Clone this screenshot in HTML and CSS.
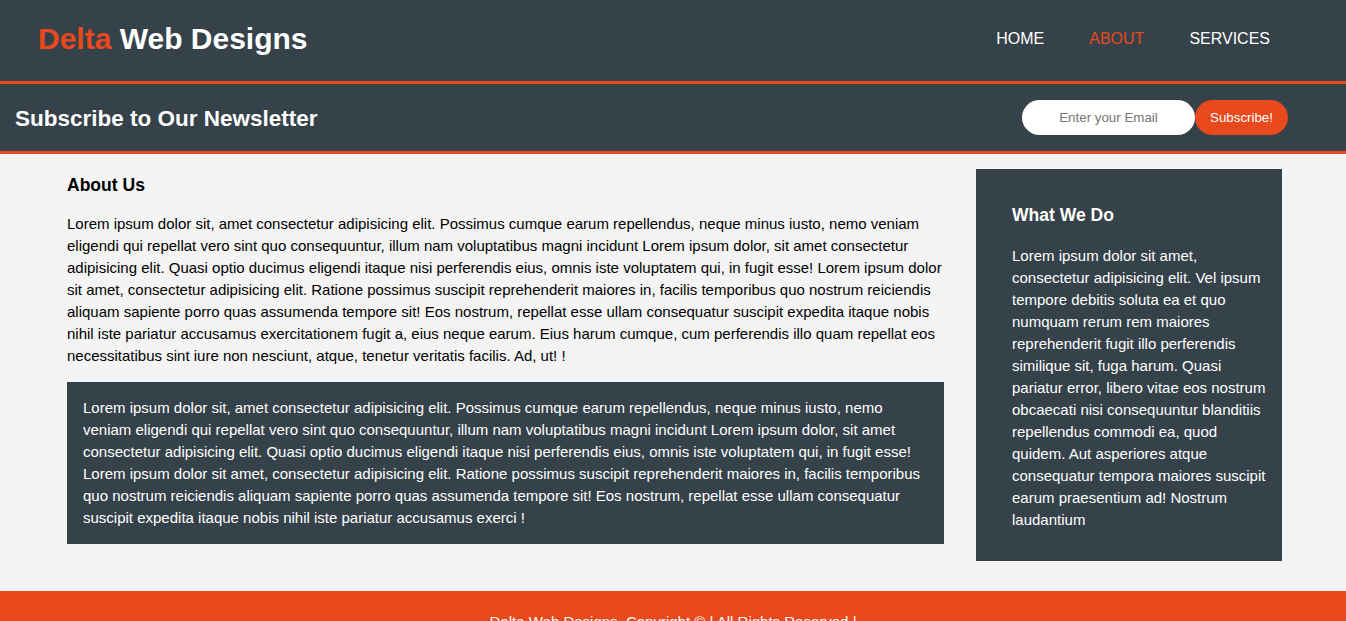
FILE: index.html
```html
<!DOCTYPE html>
<html lang="en">
<head>
<meta charset="utf-8">
<title>Delta Web Designs | About</title>
<link rel="stylesheet" href="styles.css">
</head>
<body>
<header class="site-header">
  <h1 class="logo"><span class="highlight">Delta</span> Web Designs</h1>
  <nav class="nav">
    <a href="#" class="nav-link">HOME</a>
    <a href="#" class="nav-link current">ABOUT</a>
    <a href="#" class="nav-link">SERVICES</a>
  </nav>
</header>
<section class="newsletter">
  <h1 class="newsletter-title">Subscribe to Our Newsletter</h1>
  <form class="subscribe-form">
    <input type="email" class="email-input" placeholder="Enter your Email">
    <button type="submit" class="subscribe-btn">Subscribe!</button>
  </form>
</section>
<main class="main">
  <article class="about">
    <h3 class="about-title">About Us</h3>
    <p class="about-text">Lorem ipsum dolor sit, amet consectetur adipisicing elit. Possimus cumque earum repellendus, neque minus iusto, nemo veniam eligendi qui repellat vero sint quo consequuntur, illum nam voluptatibus magni incidunt Lorem ipsum dolor, sit amet consectetur adipisicing elit. Quasi optio ducimus eligendi itaque nisi perferendis eius, omnis iste voluptatem qui, in fugit esse! Lorem ipsum dolor sit amet, consectetur adipisicing elit. Ratione possimus suscipit reprehenderit maiores in, facilis temporibus quo nostrum reiciendis aliquam sapiente porro quas assumenda tempore sit! Eos nostrum, repellat esse ullam consequatur suscipit expedita itaque nobis nihil iste pariatur accusamus exercitationem fugit a, eius neque earum. Eius harum cumque, cum perferendis illo quam repellat eos necessitatibus sint iure non nesciunt, atque, tenetur veritatis facilis. Ad, ut! !</p>
    <p class="dark-box">Lorem ipsum dolor sit, amet consectetur adipisicing elit. Possimus cumque earum repellendus, neque minus iusto, nemo veniam eligendi qui repellat vero sint quo consequuntur, illum nam voluptatibus magni incidunt Lorem ipsum dolor, sit amet consectetur adipisicing elit. Quasi optio ducimus eligendi itaque nisi perferendis eius, omnis iste voluptatem qui, in fugit esse! Lorem ipsum dolor sit amet, consectetur adipisicing elit. Ratione possimus suscipit reprehenderit maiores in, facilis temporibus quo nostrum reiciendis aliquam sapiente porro quas assumenda tempore sit! Eos nostrum, repellat esse ullam consequatur suscipit expedita itaque nobis nihil iste pariatur accusamus exerci !</p>
  </article>
  <aside class="sidebar">
    <h3 class="sidebar-title">What We Do</h3>
    <p class="sidebar-text">Lorem ipsum dolor sit amet, consectetur adipisicing elit. Vel ipsum tempore debitis soluta ea et quo numquam rerum rem maiores reprehenderit fugit illo perferendis similique sit, fuga harum. Quasi pariatur error, libero vitae eos nostrum obcaecati nisi consequuntur blanditiis repellendus commodi ea, quod quidem. Aut asperiores atque consequatur tempora maiores suscipit earum praesentium ad! Nostrum laudantium</p>
  </aside>
</main>
<footer class="footer">
  <p class="footer-text">Delta Web Designs, Copyright &copy; | All Rights Reserved |</p>
</footer>
</body>
</html>
```
FILE: styles.css
```css
* { box-sizing: border-box; }

body {
  margin: 0;
  font-family: "Liberation Sans", Arial, sans-serif;
  font-size: 15px;
  line-height: 22px;
  background: #f4f4f4;
  color: #000;
}

.site-header {
  display: flex;
  align-items: center;
  justify-content: space-between;
  height: 84px;
  padding: 0 76px 3px 38px;
  background: #35424a;
  border-bottom: 3px solid #e8491d;
  color: #fff;
}

.logo {
  margin: 0;
  font-size: 30px;
  line-height: 36px;
  font-weight: bold;
}

.highlight { color: #e8491d; }

.nav {
  display: flex;
  gap: 45px;
}

.nav-link {
  color: #fff;
  text-decoration: none;
  font-size: 16px;
  line-height: 20px;
}

.nav-link.current { color: #e8491d; }

.newsletter {
  display: flex;
  align-items: center;
  justify-content: space-between;
  height: 70px;
  padding: 0 58px 0 15px;
  background: #35424a;
  border-bottom: 3px solid #e8491d;
  color: #fff;
}

.newsletter-title {
  margin: 0;
  font-size: 22.5px;
  line-height: 28px;
  font-weight: bold;
  padding-top: 2px;
}

.subscribe-form {
  display: flex;
  align-items: center;
}

.email-input {
  width: 173px;
  height: 35px;
  border: 0;
  border-radius: 18px;
  background: #fff;
  font-family: "Liberation Sans", Arial, sans-serif;
  font-size: 13.33px;
  text-align: center;
  padding: 0 10px;
  color: #333;
}

.email-input::placeholder { color: #757575; }

.subscribe-btn {
  width: 93px;
  height: 35px;
  border: 0;
  border-radius: 18px;
  background: #e8491d;
  color: #fff;
  font-family: "Liberation Sans", Arial, sans-serif;
  font-size: 13.33px;
  padding: 0;
}

.main {
  display: flex;
  align-items: flex-start;
  gap: 32px;
  padding: 15px 64px 0 67px;
}

.about {
  width: 877px;
  flex: none;
}

.about-title {
  margin: 3px 0 14px;
  font-size: 17.55px;
  line-height: 27px;
  font-weight: bold;
}

.about-text { margin: 0 0 15px; }

.dark-box {
  margin: 0;
  padding: 15px 16px;
  background: #35424a;
  color: #fff;
}

.sidebar {
  width: 306px;
  flex: none;
  padding: 33px 14px 30px 36px;
  background: #35424a;
  color: #fff;
}

.sidebar-title {
  margin: 0 0 17px;
  font-size: 17.55px;
  line-height: 26px;
  font-weight: bold;
}

.sidebar-text { margin: 0; }

.footer {
  margin-top: 30px;
  padding: 20px;
  background: #e8491d;
  color: #fff;
  text-align: center;
}

.footer-text { margin: 0; }
```
